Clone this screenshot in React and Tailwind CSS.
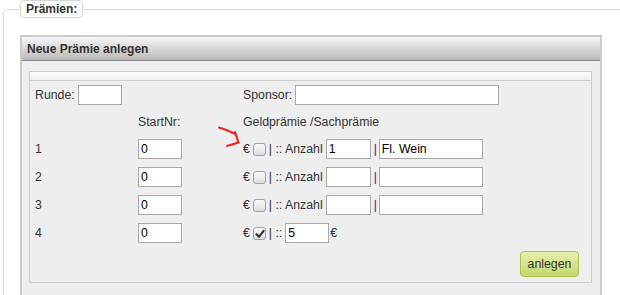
import React from "react";

function Checkbox({ checked }) {
  return (
    <span className="relative ml-[3px] inline-block h-[13px] w-[13px] shrink-0 rounded-[3px] border border-[#a0a0a0] bg-gradient-to-b from-[#fcfcfc] to-[#dcdcdc]">
      {checked && (
        <svg className="absolute left-[1px] top-[1px]" width="10" height="10" viewBox="0 0 10 10">
          <path d="M1.5 5.2 L4 7.8 L8.6 1.8" fill="none" stroke="#2a2a2a" strokeWidth="2" strokeLinecap="round" strokeLinejoin="round" />
        </svg>
      )}
    </span>
  );
}

function Field({ w, value = "", className = "" }) {
  return (
    <input
      readOnly
      value={value}
      className={`h-[20px] ${w} shrink-0 border border-[#a9a9a9] bg-white px-[2px] text-[12.3px] text-black outline-none ${className}`}
    />
  );
}

function PrizeRow({ n, anzahl, text, money }) {
  return (
    <div className="flex h-[28px] items-center">
      <div className="w-[108px] shrink-0 pl-[5px]">{n}</div>
      <div className="w-[105px] shrink-0">
        <Field w="w-[44px]" value="0" />
      </div>
      <div className="flex items-center">
        <span>€</span>
        <Checkbox checked={!!money} />
        {money ? (
          <>
            <span className="ml-[3px] whitespace-pre">| ::</span>
            <Field w="w-[44px]" value={money} className="ml-[3px]" />
            <span className="ml-[1px]">€</span>
          </>
        ) : (
          <>
            <span className="ml-[3px] whitespace-pre">| :: Anzahl</span>
            <Field w="w-[45px]" value={anzahl} className="ml-[3px]" />
            <span className="ml-[3px] text-[#800080]">|</span>
            <Field w="w-[104px]" value={text} className="ml-[2px]" />
          </>
        )}
      </div>
    </div>
  );
}

export default function App() {
  return (
    <div className="relative h-[295px] w-[620px] overflow-hidden bg-white font-['Liberation_Sans',Arial,sans-serif] text-[12.3px] text-[#333]">
      <fieldset className="ml-[3px] w-[640px] rounded-tl-[5px] border border-[#dcdcdc] pl-[16px]">
        <legend className="h-[18px] rounded-[4px] border border-[#d6d6d6] bg-white px-[5px] text-[12px] font-bold leading-[16px] text-[#333]">
          Prämien:
        </legend>
        <div className="mt-[17px] w-[582px] border-2 border-[#cbcbcb] bg-[#eeeeee]">
          <div className="flex h-[24px] items-center border-b border-[#8a8a8a] bg-gradient-to-b from-[#f7f7f7] to-[#b9b9b9] pl-[5px] text-[12px] font-bold text-[#333]">
            Neue Prämie anlegen
          </div>
          <div className="pl-[7px] pr-[8px] pt-[10px] pb-[20px]">
            <div className="border border-[#cccccc] bg-[#eeeeee] pb-[5px]">
              <div className="h-[9px] border-b border-[#cccccc] bg-gradient-to-b from-[#fafafa] to-[#f0f0f0]" />
              <div className="flex h-[28px] items-center">
                <div className="flex w-[213px] shrink-0 items-center pl-[5px]">
                  <span>Runde:</span>
                  <Field w="w-[44px]" className="ml-[3px]" />
                </div>
                <div className="flex items-center">
                  <span>Sponsor:</span>
                  <Field w="w-[204px]" className="ml-[3px]" />
                </div>
              </div>
              <div className="flex h-[26px] items-center">
                <div className="w-[108px] shrink-0" />
                <div className="w-[105px] shrink-0">StartNr:</div>
                <div>Geldprämie /Sachprämie</div>
              </div>
              <PrizeRow n="1" anzahl="1" text="Fl. Wein" />
              <PrizeRow n="2" anzahl="" text="" />
              <PrizeRow n="3" anzahl="" text="" />
              <PrizeRow n="4" money="5" />
              <div className="mt-[4px] flex justify-end pr-[12px]">
                <button className="h-[26px] w-[59px] rounded-[4px] border border-[#a8c24c] bg-gradient-to-b from-[#e6f0ad] to-[#c3d86c] text-[12.3px] text-[#333]">
                  anlegen
                </button>
              </div>
            </div>
          </div>
        </div>
      </fieldset>
      <svg className="pointer-events-none absolute left-0 top-0" width="620" height="295" viewBox="0 0 620 295">
        <path d="M219 127.5 Q228 130 235.5 134" fill="none" stroke="#ff1a1a" strokeWidth="2" strokeLinecap="round" />
        <path d="M235 132 L238.5 142.5" fill="none" stroke="#ff1a1a" strokeWidth="2" strokeLinecap="round" />
        <path d="M227 146 L238.5 142.5" fill="none" stroke="#ff1a1a" strokeWidth="2" strokeLinecap="round" />
      </svg>
    </div>
  );
}
